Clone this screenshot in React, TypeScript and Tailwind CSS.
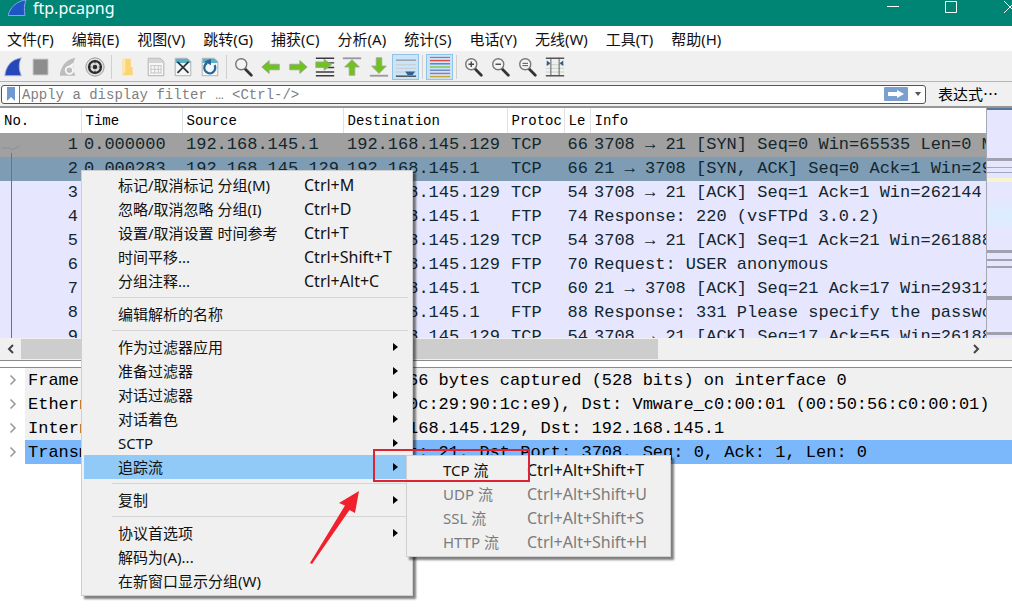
import type { ReactNode } from 'react';

const packets = [
  { no: 1, time: '0.000000', src: '192.168.145.1', dst: '192.168.145.129', proto: 'TCP', len: 66, info: '3708 → 21 [SYN] Seq=0 Win=65535 Len=0 MS', tone: 'bg-[#a0a0a0]' },
  { no: 2, time: '0.000283', src: '192.168.145.129', dst: '192.168.145.1', proto: 'TCP', len: 66, info: '21 → 3708 [SYN, ACK] Seq=0 Ack=1 Win=29', tone: 'bg-[#7f9cb5]' },
  { no: 3, time: '', src: '192.168.145.1', dst: '192.168.145.129', proto: 'TCP', len: 54, info: '3708 → 21 [ACK] Seq=1 Ack=1 Win=262144', tone: 'bg-[#e7e6ff]' },
  { no: 4, time: '', src: '192.168.145.129', dst: '192.168.145.1', proto: 'FTP', len: 74, info: 'Response: 220 (vsFTPd 3.0.2)', tone: 'bg-[#e7e6ff]' },
  { no: 5, time: '', src: '192.168.145.1', dst: '192.168.145.129', proto: 'TCP', len: 54, info: '3708 → 21 [ACK] Seq=1 Ack=21 Win=261888', tone: 'bg-[#e7e6ff]' },
  { no: 6, time: '', src: '192.168.145.1', dst: '192.168.145.129', proto: 'FTP', len: 70, info: 'Request: USER anonymous', tone: 'bg-[#e7e6ff]' },
  { no: 7, time: '', src: '192.168.145.129', dst: '192.168.145.1', proto: 'TCP', len: 60, info: '21 → 3708 [ACK] Seq=21 Ack=17 Win=29312', tone: 'bg-[#e7e6ff]' },
  { no: 8, time: '', src: '192.168.145.129', dst: '192.168.145.1', proto: 'FTP', len: 88, info: 'Response: 331 Please specify the passwo', tone: 'bg-[#e7e6ff]' },
  { no: 9, time: '', src: '192.168.145.1', dst: '192.168.145.129', proto: 'TCP', len: 54, info: '3708 → 21 [ACK] Seq=17 Ack=55 Win=26188', tone: 'bg-[#e7e6ff]' },
];

const details = [
  { head: 'Frame 2: 66 bytes on wire (528 bits), ', tail: '66 bytes captured (528 bits) on interface 0' },
  { head: 'Ethernet II, Src: Vmware_90:1c:e9 (00:', tail: '0c:29:90:1c:e9), Dst: Vmware_c0:00:01 (00:50:56:c0:00:01)' },
  { head: 'Internet Protocol Version 4, Src: 192.', tail: '168.145.129, Dst: 192.168.145.1' },
  { head: 'Transmission Control Protocol, Src Por', tail: 't: 21, Dst Port: 3708, Seq: 0, Ack: 1, Len: 0', selected: true },
];

const menuBar = ['文件(F)', '编辑(E)', '视图(V)', '跳转(G)', '捕获(C)', '分析(A)', '统计(S)', '电话(Y)', '无线(W)', '工具(T)', '帮助(H)'];

type Item = { label: string; keys?: string; sub?: boolean; active?: boolean; disabled?: boolean };

const menuGroups: Item[][] = [
  [
    { label: '标记/取消标记 分组(M)', keys: 'Ctrl+M' },
    { label: '忽略/取消忽略 分组(I)', keys: 'Ctrl+D' },
    { label: '设置/取消设置 时间参考', keys: 'Ctrl+T' },
    { label: '时间平移...', keys: 'Ctrl+Shift+T' },
    { label: '分组注释...', keys: 'Ctrl+Alt+C' },
  ],
  [{ label: '编辑解析的名称' }],
  [
    { label: '作为过滤器应用', sub: true },
    { label: '准备过滤器', sub: true },
    { label: '对话过滤器', sub: true },
    { label: '对话着色', sub: true },
    { label: 'SCTP', sub: true },
    { label: '追踪流', sub: true, active: true },
  ],
  [{ label: '复制', sub: true }],
  [{ label: '协议首选项', sub: true }, { label: '解码为(A)...' }, { label: '在新窗口显示分组(W)' }],
];

const followItems: Item[] = [
  { label: 'TCP 流', keys: 'Ctrl+Alt+Shift+T' },
  { label: 'UDP 流', keys: 'Ctrl+Alt+Shift+U', disabled: true },
  { label: 'SSL 流', keys: 'Ctrl+Alt+Shift+S', disabled: true },
  { label: 'HTTP 流', keys: 'Ctrl+Alt+Shift+H', disabled: true },
];

const Icon = ({ children }: { children: ReactNode }) => (
  <svg viewBox="0 0 24 24" className="w-[22px] h-[22px]" fill="none" aria-hidden="true">
    {children}
  </svg>
);

const Lens = ({ children }: { children?: ReactNode }) => (
  <Icon>
    <path d="M13 14l7 7" stroke="#333" strokeWidth="3" strokeLinecap="round" />
    <circle cx="9" cy="9" r="6" fill="#f4f4f4" stroke="#777" strokeWidth="1.500" />
    {children}
  </Icon>
);

const Page = ({ children, fill = '#f6f8f8', top = '#5bb0c8' }: { children?: ReactNode; fill?: string; top?: string }) => (
  <Icon>
    <path d="M3.500 2.500h13l4 3.500v15.500h-17z" fill={fill} stroke="#aaa" />
    <path d="M4 3h12.500L20 6v1.500H4z" fill={top} />
    {children}
  </Icon>
);

const toolGroups: { label: string; on?: boolean; icon: ReactNode }[][] = [
  [
    { label: '开始捕获', icon: <Icon><path d="M2 21.500C3 12 8 4 20 2c-3 6-3 12 0 19.500z" fill="#2647b8" stroke="#a9b4dc" /></Icon> },
    { label: '停止捕获', icon: <Icon><path d="M3.500 3.500h16v17h-16z" fill="#8d8d8d" stroke="#b5b5b5" /></Icon> },
    {
      label: '重新捕获',
      icon: (
        <Icon>
          <path d="M3 21.500C4 12 9 4 20 2c-3 6-3 12 0 19.500z" fill="#bdbdbd" />
          <circle cx="13.500" cy="15.500" r="4" stroke="#f8f8f8" strokeWidth="2" />
          <path d="M12 11.500h6V7z" fill="#f5f5f5" />
        </Icon>
      ),
    },
    {
      label: '捕获选项',
      icon: (
        <Icon>
          <circle cx="12" cy="12" r="10" fill="#ddd" stroke="#999" />
          <circle cx="12" cy="12" r="6.500" stroke="#2b2b2b" strokeWidth="2.500" />
          <circle cx="12" cy="12" r="2.500" fill="#2b2b2b" />
          <path d="M12 5v3M12 16v3M5 12h3M16 12h3" stroke="#2b2b2b" />
        </Icon>
      ),
    },
  ],
  [
    { label: '打开', icon: <Icon><path d="M5 3h9v9h2v9H5z" fill="#fcd475" /><path d="M5 3h3v14l-3 4z" fill="#fde7ae" /></Icon> },
    {
      label: '保存',
      icon: (
        <Page top="#d5d5d5">
          <path d="M6 10.500h12M6 14.500h12M6 18.500h12M6.500 10v9M10.500 10v9M14.500 10v9M17.500 10v9" stroke="#c4c4c4" />
        </Page>
      ),
    },
    { label: '关闭', icon: <Page><path d="M6 6.500l12 12M18 6.500l-12 12" stroke="#2d363a" strokeWidth="2" /></Page> },
    {
      label: '重新加载',
      icon: (
        <Page>
          <path d="M17 10a6 6 0 1 1-8-2.500" stroke="#25679d" strokeWidth="2.500" />
          <path d="M6 6l7-3v7z" fill="#25679d" />
        </Page>
      ),
    },
  ],
  [
    { label: '查找分组', icon: <Lens /> },
    { label: '后退', icon: <Icon><path d="M2 12l8-7v4h11v6H10v4z" fill="#6fc21f" stroke="#9aa98c" /></Icon> },
    { label: '前进', icon: <Icon><path d="M22 12l-8-7v4H3v6h11v4z" fill="#6fc21f" stroke="#9aa98c" /></Icon> },
    {
      label: '转到分组',
      icon: (
        <Icon>
          <path d="M2 2.500h20M13 7.500h9M13 12.500h9M2 17.500h20M2 21.500h20" stroke="#3b3b3b" strokeWidth="1.500" />
          <path d="M19 9.500l-8-6v3H2v6h9v3z" fill="#6fc21f" stroke="#9aa98c" />
        </Icon>
      ),
    },
    {
      label: '第一个分组',
      icon: <Icon><path d="M2 2.500h20" stroke="#999" strokeWidth="2" /><path d="M12 4l8 8h-5v9H9v-9H4z" fill="#6fc21f" stroke="#9aa98c" /></Icon>,
    },
    {
      label: '最后一个分组',
      icon: <Icon><path d="M2 21.500h20" stroke="#999" strokeWidth="2" /><path d="M12 19l8-8h-5V2H9v9H4z" fill="#6fc21f" stroke="#9aa98c" /></Icon>,
    },
    {
      label: '自动滚动',
      on: true,
      icon: (
        <Icon>
          <path d="M1 4.500h22" stroke="#777" />
          <path d="M1 9.500h22M1 13.500h22M1 17.500h22" stroke="#c5cbcc" />
          <path d="M1 22h22" stroke="#444" strokeWidth="1.500" />
          <path d="M11 17h11l-3 4h-5z" fill="#2d6295" />
        </Icon>
      ),
    },
  ],
  [
    {
      label: '着色',
      on: true,
      icon: (
        <Icon>
          <path d="M1 1.500h22" stroke="#6b6b6b" />
          <path d="M1 5h22" stroke="#dc4848" strokeWidth="1.500" />
          <path d="M1 8.500h22" stroke="#5d74c9" strokeWidth="1.500" />
          <path d="M1 12h22" stroke="#6fc84a" strokeWidth="1.500" />
          <path d="M1 15.500h22" stroke="#6b86c0" strokeWidth="1.500" />
          <path d="M1 19h22" stroke="#a66fb0" strokeWidth="1.500" />
          <path d="M1 22.500h22" stroke="#c8a535" strokeWidth="1.500" />
        </Icon>
      ),
    },
  ],
  [
    { label: '放大', icon: <Lens><path d="M6 9h6M9 6v6" stroke="#444" strokeWidth="1.500" /></Lens> },
    { label: '缩小', icon: <Lens><path d="M6 9h6" stroke="#444" strokeWidth="1.500" /></Lens> },
    { label: '正常大小', icon: <Lens><path d="M6 8h6M6 10.500h6" stroke="#444" /></Lens> },
    {
      label: '调整列宽',
      icon: (
        <Icon>
          <path d="M2 2.500h20M2 21.500h20" stroke="#555" strokeWidth="1.500" />
          <path d="M2 9.500h20M2 13.500h20M2 17.500h20" stroke="#c8cfc8" />
          <path d="M7.500 2v20M16.500 2v20" stroke="#555" />
          <path d="M3 5l4 3-4 3zM21 5l-4 3 4 3z" fill="#2f5a85" />
        </Icon>
      ),
    },
  ],
];

const MenuRow = ({ item, labelWidth }: { item: Item; labelWidth: string }) => (
  <li>
    <button
      type="button"
      disabled={item.disabled}
      className={`flex items-center w-full h-6 pl-[34px] pr-3 text-left whitespace-nowrap ${item.active ? 'bg-[#91c9f7]' : ''} ${item.disabled ? 'text-[#7c7c7c]' : 'text-[#111]'}`}
    >
      <span className={labelWidth}>{item.label}</span>
      <span className="flex-1 text-[16px]">{item.keys}</span>
      {item.sub && (
        <svg viewBox="0 0 5 8" className="w-[5px] h-2" aria-hidden="true">
          <path d="M0 0l5 4-5 4z" fill="#000" />
        </svg>
      )}
    </button>
  </li>
);

const ContextMenu = () => (
  <div className="absolute left-[81px] top-[170px] w-[332px] p-[2px] border border-[#cfcfcf] bg-[#f0f0f0] shadow-[3px_3px_2px_rgba(0,0,0,0.5)]">
    {menuGroups.map((group, i) => (
      <div key={i}>
        {i > 0 && <hr className="my-1 ml-7 mr-[2px] border-[#d5d5d5]" />}
        <ul>
          {group.map((item) => (
            <MenuRow key={item.label} item={item} labelWidth="w-[186px]" />
          ))}
        </ul>
      </div>
    ))}
  </div>
);

const FollowMenu = () => (
  <div className="absolute left-[406px] top-[455px] w-[265px] p-[2px] border border-[#cfcfcf] bg-[#f0f0f0] shadow-[3px_3px_2px_rgba(0,0,0,0.5)]">
    <ul>
      {followItems.map((item) => (
        <MenuRow key={item.label} item={item} labelWidth="w-[84px]" />
      ))}
    </ul>
  </div>
);

const Minimap = () => (
  <svg viewBox="0 0 26 230" preserveAspectRatio="none" className="w-[26px] h-[230px] shrink-0" aria-hidden="true">
    <defs>
      <linearGradient id="ftpBand" x1="0" y1="0" x2="0" y2="1">
        <stop offset="0" stopColor="#e7e6ff" />
        <stop offset="0.5" stopColor="#daeeff" />
        <stop offset="1" stopColor="#e7e6ff" />
      </linearGradient>
    </defs>
    <path d="M0 0h26v230H0z" fill="#e7e6ff" />
    <path d="M0 90h26v36H0z" fill="url(#ftpBand)" />
    <path d="M0 0h26v2H0z" fill="#54779c" />
    <path d="M0 50h26v3H0zM0 142h26v3H0zM0 151h26v2H0zM0 158h26v2H0zM0 188h26v4H0zM0 224h26v3H0z" fill="#a0a0ae" />
    <path d="M0 59h26v1H0zM0 64h26v1H0z" fill="#9fa9c4" />
    <path d="M1 70h25v4H1z" fill="#f7f5cf" />
    <path d="M0 0h1v230H0z" fill="#a5a9b5" />
  </svg>
);

const PacketList = () => (
  <section className="bg-[#f0f0f0] border-b border-[#8a8a8a]">
    <div className="flex">
      <div className="relative flex-1 min-w-0 h-[230px] overflow-hidden bg-white">
        <table className="w-full table-fixed border-collapse">
          <colgroup>
            <col className="w-[81px]" />
            <col className="w-[101px]" />
            <col className="w-[161px]" />
            <col className="w-[164px]" />
            <col className="w-[57px]" />
            <col className="w-[26px]" />
            <col />
          </colgroup>
          <thead className="font-['Liberation_Mono','Noto_Sans_CJK_SC',monospace] text-[14px] leading-[23px] text-black">
            <tr className="text-left">
              {['No.', 'Time', 'Source', 'Destination', 'Protoc', 'Le', 'Info'].map((title) => (
                <th key={title} className="h-[25px] p-0 pt-[2px] pl-1 font-normal whitespace-nowrap border-r border-[#e2e2e2] last:border-r-0">
                  {title}
                </th>
              ))}
            </tr>
          </thead>
          <tbody className="font-['Liberation_Mono','DejaVu_Sans_Mono',monospace] text-[17px] leading-6 text-[#12272e]">
            {packets.map((p) => (
              <tr key={p.no} className={`${p.tone} whitespace-nowrap`}>
                <td className="h-6 p-0 pr-[3px] text-right">{p.no}</td>
                <td className="p-0 pl-[3px]">{p.time}</td>
                <td className="p-0 pl-1">{p.src}</td>
                <td className="p-0 pl-1">{p.dst}</td>
                <td className="p-0 pl-1">{p.proto}</td>
                <td className="p-0 pr-[2px] text-right">{p.len}</td>
                <td className="p-0 pl-1 overflow-hidden">{p.info}</td>
              </tr>
            ))}
          </tbody>
        </table>
        {/* conversation bracket */}
        <svg viewBox="0 0 24 194" className="absolute left-0 top-9 w-6 h-[194px]" fill="none" aria-hidden="true">
          <path d="M2 4h8l2 2 8-4" stroke="#8c9191" />
          <path d="M11.500 9v185" stroke="#6d7480" />
        </svg>
      </div>
      <Minimap />
    </div>
    <div className="flex items-center h-[22px] pr-[26px]">
      <button type="button" aria-label="向左滚动" className="flex items-center justify-center w-[21px] h-full">
        <svg viewBox="0 0 10 10" className="w-[10px] h-[10px]" fill="none"><path d="M7 1L3 5l4 4" stroke="#444" strokeWidth="2" /></svg>
      </button>
      <div className="flex-1 h-5">
        <div className="w-[67.5%] h-full bg-[#cdcdcd]" />
      </div>
      <button type="button" aria-label="向右滚动" className="flex items-center justify-center w-[21px] h-full">
        <svg viewBox="0 0 10 10" className="w-[10px] h-[10px]" fill="none"><path d="M3 1l4 4-4 4" stroke="#444" strokeWidth="2" /></svg>
      </button>
    </div>
  </section>
);

const DetailTree = () => (
  <section className="mt-[6px] border-t border-[#8a8a8a] bg-white">
    <ul className="font-['Liberation_Mono','DejaVu_Sans_Mono',monospace] text-[17px] leading-[26px] text-black">
      {details.map((row) => (
        <li key={row.head} className="flex h-6">
          <button type="button" aria-label="展开" className="flex items-center justify-center w-[25px]">
            <svg viewBox="0 0 8 12" className="w-2 h-3" fill="none"><path d="M1.500 1.500L6 6l-4.500 4.500" stroke="#969696" strokeWidth="1.500" /></svg>
          </button>
          <div className={`flex flex-1 min-w-0 pl-[3px] whitespace-pre ${row.selected ? 'bg-[#7ab7fb]' : 'bg-[#f0f0f0]'}`}>
            <span className="w-[380px] shrink-0 overflow-hidden">{row.head}</span>
            <span>{row.tail}</span>
          </div>
        </li>
      ))}
    </ul>
  </section>
);

const App = () => {
  return (
    <div className="relative min-h-screen overflow-hidden bg-white font-['Noto_Sans','Noto_Sans_CJK_SC',sans-serif] text-[15px] leading-6">
      {/* Title bar */}
      <header className="flex items-start h-[26px] bg-[#008575] text-white overflow-hidden">
        <svg viewBox="0 0 20 16" className="ml-2 w-5 h-4 shrink-0" aria-hidden="true">
          <path d="M0 15.500C2 8 8 1 18 0c-2 5-2 10-1 15.500z" fill="#1f56c4" stroke="#7fa6e6" />
        </svg>
        <h1 className="flex-1 pl-[5px] text-[16px] leading-4">ftp.pcapng</h1>
        <div className="flex -mr-3">
          <button type="button" aria-label="最小化" className="w-[58px] h-4">
            <svg viewBox="0 0 58 16" className="w-full h-full" fill="none"><path d="M23 6.500h12" stroke="#fff" /></svg>
          </button>
          <button type="button" aria-label="最大化" className="w-[58px] h-4">
            <svg viewBox="0 0 58 16" className="w-full h-full" fill="none"><path d="M23.500 1.500h11v11h-11z" stroke="#fff" /></svg>
          </button>
          <button type="button" aria-label="关闭" className="w-[44px] h-4">
            <svg viewBox="0 0 44 16" className="w-full h-full" fill="none"><path d="M24 1l12 12M36 1L24 13" stroke="#fff" /></svg>
          </button>
        </div>
      </header>

      {/* Menu bar */}
      <nav className="flex h-[25px] pl-[7px] gap-[18px] text-[#111]">
        {menuBar.map((label) => (
          <button key={label} type="button" className="whitespace-nowrap">
            {label}
          </button>
        ))}
      </nav>

      {/* Toolbar */}
      <div className="flex items-end h-[31px] pb-px bg-[#f0f0f0] border-b border-[#b5b5b5]">
        {toolGroups.map((group, i) => (
          <div key={i} className="flex items-center">
            {i > 0 && <span className="flex justify-center w-[7px] h-6"><span className="w-px bg-[#d0d0d0]" /></span>}
            {group.map((tool) => (
              <button
                key={tool.label}
                type="button"
                aria-label={tool.label}
                className={`flex items-center justify-center w-[27px] h-[26px] ${tool.on ? 'bg-[#cce4f7] border border-[#8fc3ea]' : ''}`}
              >
                {tool.icon}
              </button>
            ))}
          </div>
        ))}
      </div>

      {/* Filter */}
      <div className="flex items-center h-[26px] pl-px pr-[14px] bg-[#f0f0f0] border-b-2 border-[#969696]">
        <div className="flex items-center flex-1 h-[19px] border border-[#555] rounded-[3px] bg-white">
          <button type="button" aria-label="书签" className="flex items-center justify-center w-[18px] h-full border-r border-[#777]">
            <svg viewBox="0 0 8 14" className="w-2 h-[14px]"><path d="M0 0h8v14l-4-4-4 4z" fill="#7299cf" /></svg>
          </button>
          <input
            type="text"
            aria-label="显示过滤器"
            placeholder="Apply a display filter … <Ctrl-/>"
            className="flex-1 min-w-0 h-full pt-[2px] pl-[2px] bg-transparent outline-none font-['Liberation_Mono','Noto_Sans_CJK_SC',monospace] text-[14px] placeholder:text-[#808080]"
          />
          <button type="button" aria-label="应用" className="w-6 h-[14px]">
            <svg viewBox="0 0 24 14" className="w-6 h-[14px]">
              <rect width="24" height="14" rx="1" fill="#7ba0cf" />
              <path d="M4 5h9V3l7 4-7 4V9H4z" fill="#fff" />
            </svg>
          </button>
          <button type="button" aria-label="历史" className="flex justify-center w-[17px] pl-1">
            <svg viewBox="0 0 6 4" className="w-[6px] h-1"><path d="M0 0h6L3 4z" fill="#555" /></svg>
          </button>
        </div>
        <button type="button" className="ml-3 font-['Noto_Sans_CJK_SC',sans-serif] text-black">表达式…</button>
      </div>

      <PacketList />
      <DetailTree />

      <ContextMenu />
      <FollowMenu />

      {/* Red annotations over the menus */}
      <div className="absolute left-[373px] top-[449px] w-[157px] h-[33px] border-[2px] border-[#dd2430] pointer-events-none" />
      <svg viewBox="0 0 50 74" className="absolute left-[310px] top-[490px] w-[50px] h-[74px] pointer-events-none" aria-hidden="true">
        <path d="M49 1L29 13l6 2.500L0 73l2 1L39.500 20l5.500 3z" fill="#f0202c" />
      </svg>
    </div>
  );
};

export default App;
